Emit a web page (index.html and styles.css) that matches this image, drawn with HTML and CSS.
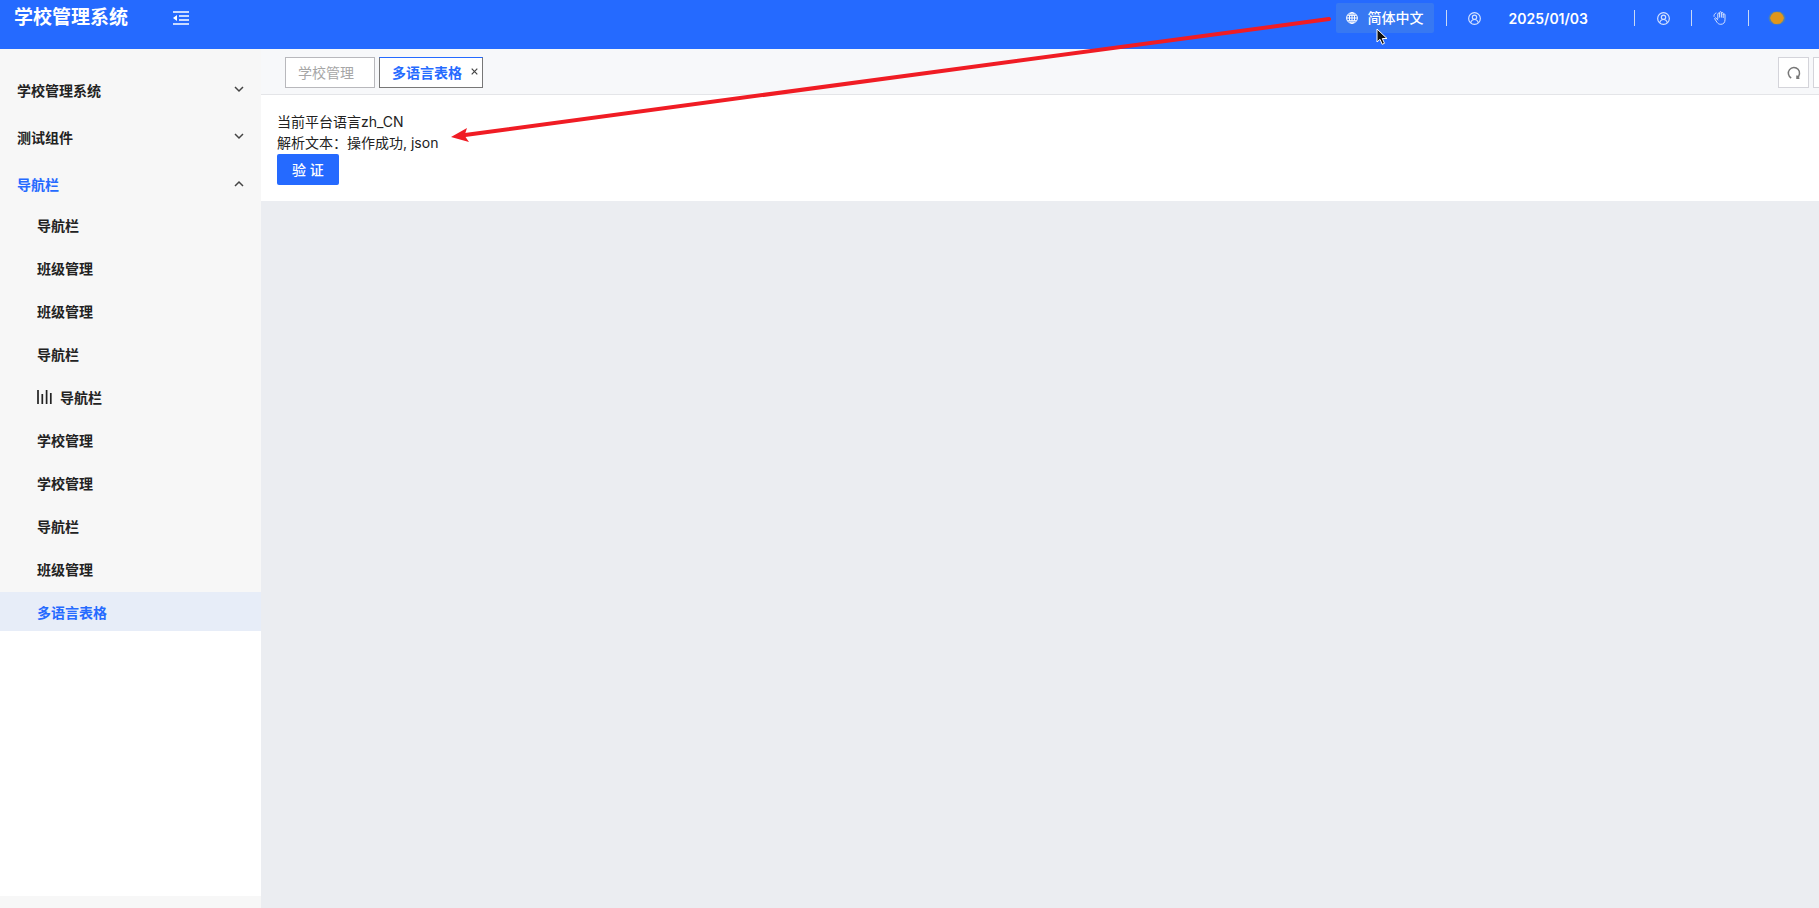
FILE: index.html
```html
<!DOCTYPE html>
<html lang="zh-CN">
<head>
  <meta charset="UTF-8" />
  <meta name="viewport" content="width=device-width, initial-scale=1.0" />
  <title>学校管理系统</title>
  <link rel="stylesheet" href="styles.css">
</head>
<body>
  <header class="header">
    <h1 class="logo">学校管理系统</h1>
    <button class="icon-btn fold" type="button" aria-label="收起菜单">
      <svg width="16" height="14" viewBox="0 0 16 14" fill="none" stroke="currentColor" stroke-width="1.3">
        <path d="M0 1h16M6 5h10M6 9h10M0 13h16" />
        <path d="M4 4v6L0 7z" fill="currentColor" stroke="none" />
      </svg>
    </button>

    <div class="header-right">
      <button class="lang" type="button">
        <svg width="12" height="12" viewBox="0 0 12 12" fill="none" stroke="currentColor">
          <circle cx="6" cy="6" r="5.4" />
          <ellipse cx="6" cy="6" rx="2.6" ry="5.4" />
          <path d="M6 .6v10.8M.6 6h10.8M1.5 3.3h9M1.5 8.7h9" />
        </svg>
        <span>简体中文</span>
      </button>
      <span class="divider"></span>
      <button class="icon-btn" type="button" aria-label="用户">
        <svg width="13" height="13" viewBox="0 0 12 12" fill="none" stroke="currentColor" stroke-width="1.1">
          <circle cx="6" cy="6" r="5.4" />
          <circle cx="6" cy="4.8" r="2" />
          <path d="M2.4 10c.5-2 1.9-3.1 3.6-3.1s3.1 1.1 3.6 3.1" />
        </svg>
      </button>
      <time class="date" datetime="2025-01-03">2025/01/03</time>
      <span class="divider"></span>
      <button class="icon-btn" type="button" aria-label="个人中心">
        <svg width="13" height="13" viewBox="0 0 12 12" fill="none" stroke="currentColor" stroke-width="1.1">
          <circle cx="6" cy="6" r="5.4" />
          <circle cx="6" cy="4.8" r="2" />
          <path d="M2.4 10c.5-2 1.9-3.1 3.6-3.1s3.1 1.1 3.6 3.1" />
        </svg>
      </button>
      <span class="divider"></span>
      <button class="icon-btn" type="button" aria-label="手势">
        <svg width="14" height="14" viewBox="0 0 14 14" fill="none" stroke="currentColor" stroke-linecap="round" stroke-linejoin="round">
          <path d="M4.8 7.5V3a.9.9 0 0 1 1.8 0V1.6a.9.9 0 0 1 1.8 0V2.400a.9.9 0 0 1 1.8 0V3.800a.9.9 0 0 1 1.800 0V8.800c0 2.800-1.600 4.500-4.200 4.500-1.800 0-2.900-.7-3.800-2L1.800 8c-.5-.9.700-1.700 1.400-.9L4.800 9M6.600 3v3.200M8.400 2.400v3.800M10.200 3.800v2.800" />
          <path d="M1 5.400C.8 3.800 1.700 2.500 3 2" />
        </svg>
      </button>
      <span class="divider"></span>
      <button class="icon-btn avatar" type="button" aria-label="头像">
        <svg width="18" height="14" viewBox="0 0 18 14">
          <ellipse cx="9" cy="7" rx="8.5" ry="6.800" fill="#4f7fae" />
          <path d="M5.600 1.600Q9 .4 12.400 1.600Q15.400 4 16 7Q15.400 10 12.400 12.400Q9 13.600 5.600 12.400Q2.600 10 2 7Q2.600 4 5.600 1.600z" fill="#e0961c" />
        </svg>
      </button>
    </div>
  </header>

  <div class="layout">
    <aside class="sidebar">
      <nav class="menu">
        <button class="menu-title" type="button">学校管理系统
          <svg class="chevron" width="10" height="7" viewBox="0 0 10 7"><path d="M1 1l4 4 4-4" /></svg>
        </button>
        <button class="menu-title" type="button">测试组件
          <svg class="chevron" width="10" height="7" viewBox="0 0 10 7"><path d="M1 1l4 4 4-4" /></svg>
        </button>
        <button class="menu-title open" type="button">导航栏
          <svg class="chevron" width="10" height="7" viewBox="0 0 10 7"><path d="M1 6l4-4 4 4" /></svg>
        </button>
        <ul class="submenu">
          <li><a href="#">导航栏</a></li>
          <li><a href="#">班级管理</a></li>
          <li><a href="#">班级管理</a></li>
          <li><a href="#">导航栏</a></li>
          <li>
            <a href="#">
              <svg width="15" height="14" viewBox="0 0 15 14" stroke="currentColor" stroke-width="1.7"><path d="M1 0v14M5.300 4v10M9.600 0v14M13.800 3v11" /></svg>
              导航栏
            </a>
          </li>
          <li><a href="#">学校管理</a></li>
          <li><a href="#">学校管理</a></li>
          <li><a href="#">导航栏</a></li>
          <li><a href="#">班级管理</a></li>
          <li><a class="active" href="#">多语言表格</a></li>
        </ul>
      </nav>
      <div class="sidebar-footer"></div>
    </aside>

    <main class="main">
      <div class="tabs-bar">
        <div class="tabs">
          <div class="tab"><a href="#">学校管理</a></div>
          <div class="tab current">
            <a href="#">多语言表格</a>
            <button class="tab-close" type="button" aria-label="关闭">
              <svg width="7" height="7" viewBox="0 0 7 7" stroke="currentColor" stroke-width="1.2"><path d="M.7.7l5.600 5.600M6.300.7L.7 6.300" /></svg>
            </button>
          </div>
        </div>
        <div class="tools">
          <button class="tool" type="button" aria-label="刷新">
            <svg width="14" height="14" viewBox="0 0 14 14" fill="none" stroke="currentColor" stroke-width="1.5"><path d="M4.200 12A5.600 5.600 0 1 1 10 11.800M10 9.400v2.800h2.400" /></svg>
          </button>
          <button class="tool" type="button" aria-label="更多"></button>
        </div>
      </div>

      <section class="content">
        <p>当前平台语言zh_CN</p>
        <p>解析文本：操作成功, json</p>
        <button class="primary" type="button">验 证</button>
      </section>
    </main>
  </div>

  <!-- annotation and mouse pointer above the page -->
  <svg class="arrow" width="880" height="130" viewBox="0 0 880 130">
    <path d="M878 3L14 119" stroke="#f01c24" stroke-width="4" stroke-linecap="round" />
    <path d="M0 121l16-9-2.500 7.500 4.500 6.500z" fill="#f01c24" />
  </svg>
  <svg class="cursor" width="12" height="18" viewBox="0 0 12 18">
    <path d="M1 1v13l3-2.700 2.200 5 2.300-1-2.200-4.800H11z" fill="#111" stroke="#fff" />
  </svg>
</body>
</html>
```
FILE: styles.css
```css
:root {
  --primary: #256aff;
  --side-bg: #f7f7f7;
  --page-bg: #ebedf1;
  --text: #222;
}
* {
  box-sizing: border-box;
}
html, body {
  margin: 0;
  height: 100%;
}
body {
  display: flex;
  flex-direction: column;
  position: relative;
  overflow: hidden;
  font-family: Inter, "Noto Sans CJK SC", sans-serif;
  font-size: 14px;
  color: var(--text);
  background: var(--page-bg);
}
button {
  padding: 0;
  border: none;
  background: none;
  font: inherit;
  color: inherit;
  cursor: pointer;
}
a {
  color: inherit;
  text-decoration: none;
}
svg {
  display: block;
  flex: none;
}

/* header */
.header {
  display: flex;
  align-items: center;
  padding: 0 26px 13px 14px;
  background: var(--primary);
  color: #fff;
}
.logo {
  margin: 0;
  font-size: 19px;
  line-height: 36px;
  font-weight: 700;
}
.icon-btn {
  display: flex;
  align-items: center;
  justify-content: center;
  width: 32px;
  height: 32px;
  opacity: 0.8;
}
.fold {
  margin-left: 37px;
  opacity: 1;
}
.header-right {
  display: flex;
  align-items: center;
  gap: 12px;
  margin-left: auto;
}
.lang {
  display: flex;
  align-items: center;
  gap: 10px;
  height: 30px;
  padding: 0 10px;
  border-radius: 2px;
  background: #3778f2;
  font-weight: 500;
  line-height: 20px;
}
.divider {
  width: 1px;
  height: 16px;
  background: #c9d9f5;
}
.date {
  margin: 0 34px 0 6px;
  font-weight: 600;
}
.avatar {
  opacity: 1;
}

/* layout */
.layout {
  flex: 1;
  display: flex;
}
.sidebar {
  display: flex;
  flex-direction: column;
  width: 261px;
  background: #fff;
}
.menu {
  display: flex;
  flex-direction: column;
  gap: 4px;
  padding-top: 19px;
  background: var(--side-bg);
  font-weight: 700;
}
.menu-title {
  display: flex;
  align-items: center;
  justify-content: space-between;
  height: 43px;
  padding: 0 17px;
}
.menu-title.open {
  color: var(--primary);
}
.chevron {
  fill: none;
  stroke: #444;
  stroke-width: 1.5px;
}
.submenu {
  display: flex;
  flex-direction: column;
  gap: 4px;
  margin: -4px 0 0;
  padding: 0;
  list-style: none;
}
.submenu a {
  display: flex;
  align-items: center;
  gap: 8px;
  height: 39px;
  padding-left: 37px;
}
.submenu .active {
  color: var(--primary);
  background: #e7edf8;
}
.sidebar-footer {
  height: 12px;
  margin-top: auto;
  background: var(--side-bg);
}
.main {
  flex: 1;
  min-width: 0;
}

/* tabs */
.tabs-bar {
  display: flex;
  justify-content: space-between;
  height: 46px;
  padding: 8px 0 0 24px;
  border-bottom: 1px solid #e4e5e8;
  background: #f7f8fa;
}
.tabs, .tools {
  display: flex;
  gap: 4px;
}
.tab {
  display: flex;
  align-items: center;
  gap: 9px;
  height: 31px;
  padding: 0 20px 2px 12px;
  border: 1px solid #b8b8bc;
  background: #fff;
  color: #a6a6a6;
}
.tab.current {
  padding-right: 4px;
  border-color: var(--primary) #777 #777;
  color: var(--primary);
  font-weight: 700;
}
.tab-close {
  color: #444;
}
.tools {
  margin-right: -25px;
}
.tool {
  display: flex;
  align-items: center;
  justify-content: center;
  width: 31px;
  height: 31px;
  border: 1px solid #d4d4da;
  background: #fff;
  color: #777;
}

/* page content */
.content {
  padding: 16px;
  background: #fff;
}
.content p {
  margin: 0;
  line-height: 21px;
}
.primary {
  display: block;
  margin-top: 1px;
  height: 31px;
  padding: 0 15px 2px;
  border-radius: 2px;
  background: var(--primary);
  color: #fff;
  font-weight: 500;
}

.arrow {
  position: absolute;
  top: 16px;
  left: 451px;
  pointer-events: none;
}
.cursor {
  position: absolute;
  top: 28px;
  left: 1376px;
  pointer-events: none;
}
```
